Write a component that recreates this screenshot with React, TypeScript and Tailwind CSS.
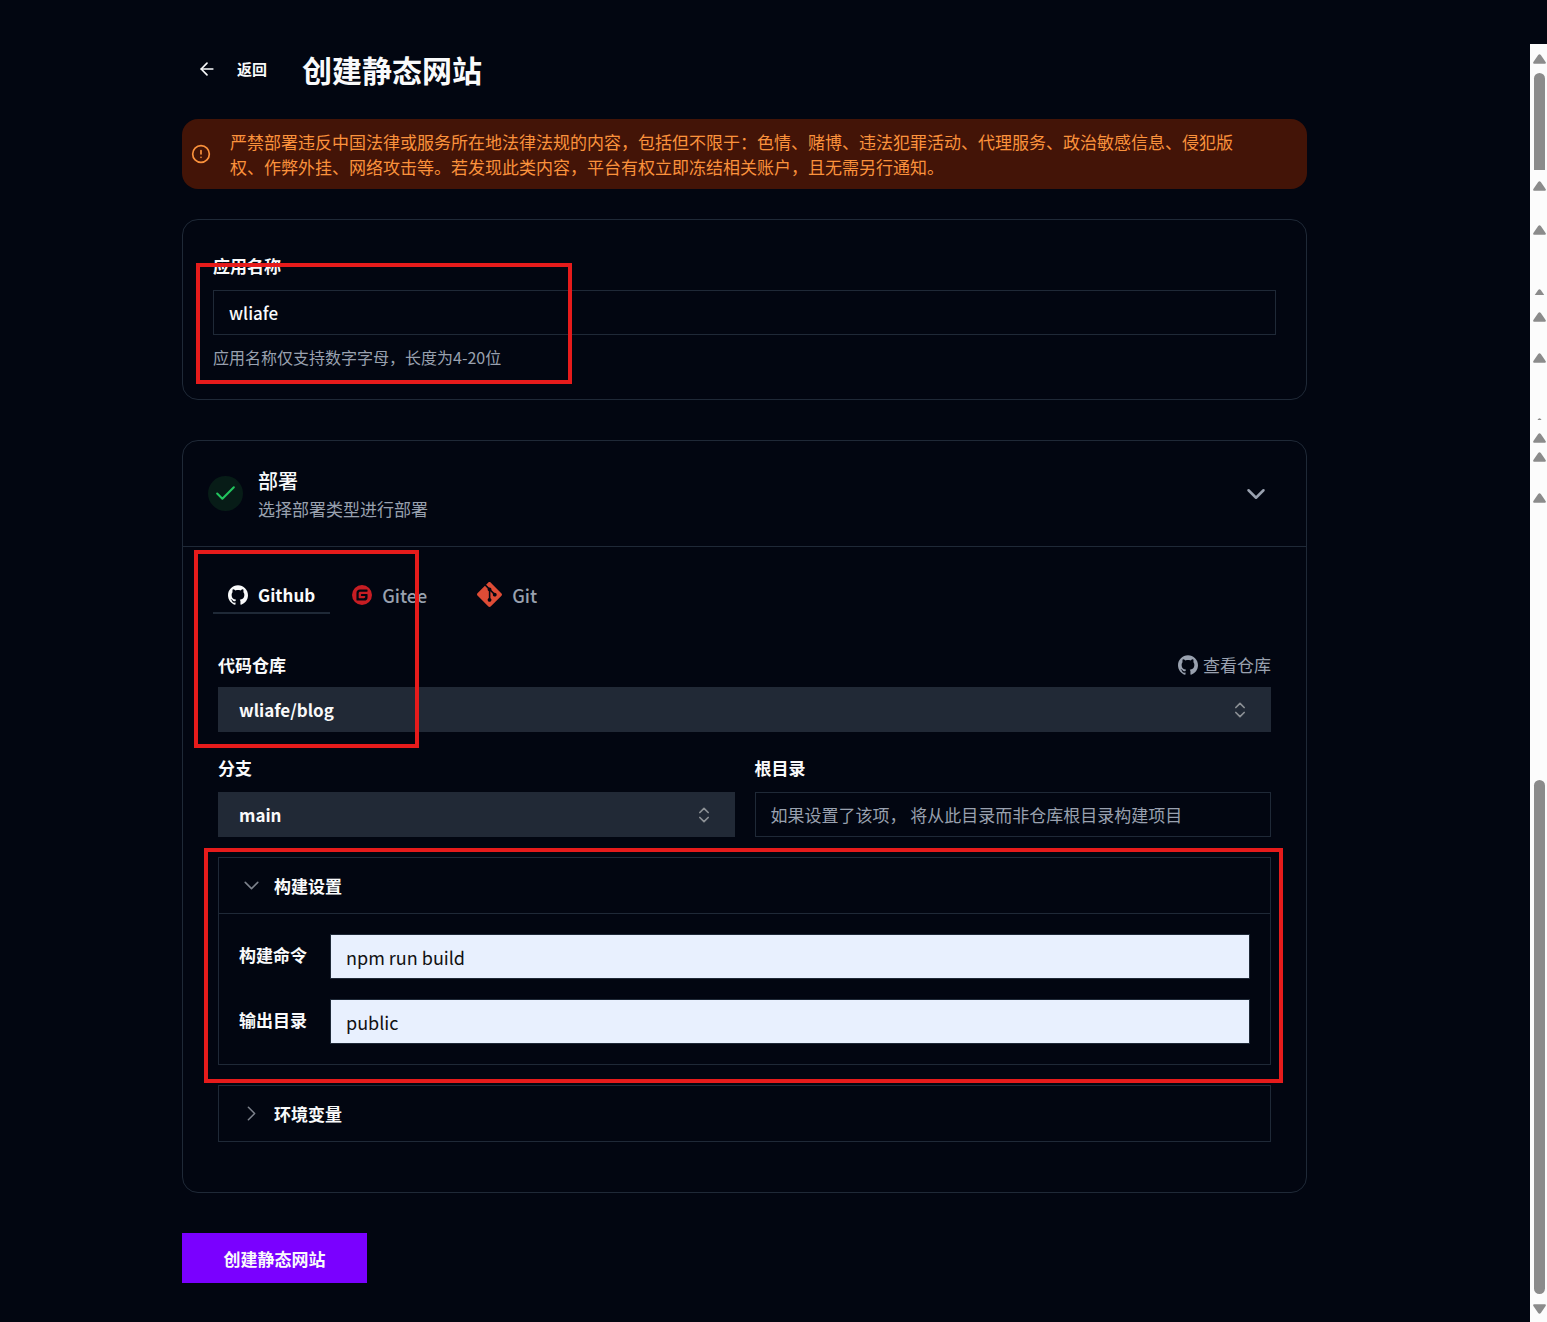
import { useState, type ReactNode } from "react";
import { ArrowLeft, Check, ChevronDown, ChevronRight, ChevronsUpDown, CircleAlert } from "lucide-react";
import { SiGit, SiGitee, SiGithub } from "react-icons/si";

function Highlight({ className }: { className: string }) {
  return <div aria-hidden="true" className={`pointer-events-none absolute z-10 border-4 border-[#e61b1b] ${className}`} />;
}

function SelectBox({ id, value }: { id: string; value: string }) {
  return (
    <div className="relative">
      <select
        id={id}
        defaultValue={value}
        className="block h-[45px] w-full appearance-none bg-[#212936] px-[21px] font-bold text-gray-50 outline-none"
      >
        <option value={value}>{value}</option>
      </select>
      <ChevronsUpDown size={20} className="pointer-events-none absolute right-[21px] top-[13px] text-[#8c9095]" />
    </div>
  );
}

function Tab({ icon, name, active, onClick, className }: { icon: ReactNode; name: string; active: boolean; onClick: () => void; className: string }) {
  return (
    <button
      type="button"
      role="tab"
      aria-selected={active}
      onClick={onClick}
      className={`flex h-[37px] items-center gap-[10px] border-b-2 px-[15px] ${
        active ? "border-[#1f2937] font-bold text-gray-50" : "border-transparent text-lg font-medium text-gray-400"
      } ${className}`}
    >
      {icon}
      {name}
    </button>
  );
}

function BuildField({ id, label, value }: { id: string; label: string; value: string }) {
  return (
    <div className="flex items-start gap-[21px]">
      <label htmlFor={id} className="w-[70px] shrink-0 pt-2 font-bold">
        {label}
      </label>
      <input
        id={id}
        defaultValue={value}
        className="h-[45px] min-w-0 flex-1 border border-[#1f2937] bg-[#e8f0fe] px-[15px] text-lg text-[#111] outline-none"
      />
    </div>
  );
}

function ArrowUp({ className }: { className: string }) {
  return (
    <svg viewBox="0 0 13 10" className={`w-[13px] shrink-0 ${className}`} preserveAspectRatio="xMidYMin slice" fill="#8b8b8b">
      <path d="M5.2 1 Q6.5 -0.6 7.8 1 L12.6 8 Q13.4 9.6 11.8 9.8 H1.2 Q-0.4 9.6 0.4 8 Z" />
    </svg>
  );
}

function ScrollRail() {
  return (
    <div aria-hidden="true" className="mt-11 flex w-[17px] shrink-0 flex-col items-center bg-[#fcfcfc] pl-[2px]">
      <ArrowUp className="mt-[10px] h-[10px]" />
      <div className="mt-[9px] h-[97px] w-[11px] shrink-0 rounded-t-full bg-[#8b8b8b]" />
      <ArrowUp className="mt-[11px] h-[10px]" />
      <ArrowUp className="mt-[34px] h-[10px]" />
      <ArrowUp className="mt-[54px] h-[6px]" />
      <ArrowUp className="mt-[17px] h-[10px]" />
      <ArrowUp className="mt-[31px] h-[10px]" />
      <ArrowUp className="mt-[55px] h-[2px]" />
      <ArrowUp className="mt-[13px] h-[10px]" />
      <ArrowUp className="mt-[9px] h-[10px]" />
      <ArrowUp className="mt-[31px] h-[10px]" />
      <div className="mt-[277px] w-[11px] flex-1 rounded-full bg-[#8b8b8b]" />
      <ArrowUp className="mb-2 mt-[10px] h-[10px] rotate-180" />
    </div>
  );
}

export default function App() {
  const [source, setSource] = useState("Github");
  return (
    <div
      lang="zh-CN"
      className="flex min-h-screen bg-[#020611] font-['Noto_Sans_CJK_SC',sans-serif] text-[17px] leading-[25px] text-gray-50"
    >
      <main className="min-w-0 flex-1 pb-[39px] pl-[182px] pr-[223px] pt-[49px]">
        <header className="flex h-10 items-center">
          <button type="button" className="ml-[15px] flex items-center gap-5 text-[15px] font-bold leading-6">
            <ArrowLeft size={20} />
            返回
          </button>
          <h1 className="ml-[35px] text-3xl font-bold leading-10">创建静态网站</h1>
        </header>

        <div role="alert" className="mt-[30px] flex items-center rounded-2xl bg-[#431407] py-[10px] pl-[9px] pr-16 text-[#fb923c]">
          <CircleAlert size={20} className="shrink-0" />
          <p className="ml-[19px]">
            严禁部署违反中国法律或服务所在地法律法规的内容，包括但不限于：色情、赌博、违法犯罪活动、代理服务、政治敏感信息、侵犯版权、作弊外挂、网络攻击等。若发现此类内容，平台有权立即冻结相关账户，且无需另行通知。
          </p>
        </div>

        <form onSubmit={(e) => e.preventDefault()}>
          <section className="relative mt-[30px] rounded-2xl border border-[#1f2937] px-[30px] pb-[29px] pt-[33px]">
            <Highlight className="left-[13px] top-[43px] h-[121px] w-[376px]" />
            <label htmlFor="app-name" className="block font-bold">
              应用名称
            </label>
            <input
              id="app-name"
              defaultValue="wliafe"
              className="mt-3 block h-[45px] w-full border border-[#1f2937] bg-transparent px-[15px] font-medium text-gray-50 outline-none"
            />
            <p className="mt-[10px] text-base leading-[25px] text-gray-400">应用名称仅支持数字字母，长度为4-20位</p>
          </section>

          <section className="mt-10 rounded-2xl border border-[#1f2937]">
            <div className="flex h-[106px] items-center border-b border-[#1f2937] pl-[25px] pr-[35px]">
              <span className="flex size-[35px] items-center justify-center rounded-full bg-[#071c17] text-[#22c55e]">
                <Check size={25} strokeWidth={2} />
              </span>
              <div className="ml-[15px] pb-px">
                <h2 className="text-xl font-medium leading-[30px]">部署</h2>
                <p className="text-gray-400">选择部署类型进行部署</p>
              </div>
              <button type="button" aria-label="收起" className="ml-auto text-gray-400">
                <ChevronDown size={30} />
              </button>
            </div>

            <div className="relative px-[35px] pb-[50px] pt-[30px]">
              <Highlight className="left-[11px] top-[3px] h-[198px] w-[225px]" />
              <div role="tablist" className="-ml-[5px] flex">
                <Tab className="" icon={<SiGithub size={20} />} name="Github" active={source === "Github"} onClick={() => setSource("Github")} />
                <Tab className="ml-[7px]" icon={<SiGitee size={20} color="#c71d23" />} name="Gitee" active={source === "Gitee"} onClick={() => setSource("Gitee")} />
                <Tab className="ml-5" icon={<SiGit size={25} color="#de4c36" />} name="Git" active={source === "Git"} onClick={() => setSource("Git")} />
              </div>

              <div className="mt-[38px] flex items-center justify-between">
                <label htmlFor="repo" className="font-bold">
                  代码仓库
                </label>
                <a href="#repo" className="flex items-center gap-[5px] text-gray-400">
                  <SiGithub size={20} />
                  查看仓库
                </a>
              </div>
              <div className="mt-[10px]">
                <SelectBox id="repo" value="wliafe/blog" />
              </div>

              <div className="mt-[23px] grid grid-cols-2 gap-5">
                <div>
                  <label htmlFor="branch" className="mb-3 block font-bold">
                    分支
                  </label>
                  <SelectBox id="branch" value="main" />
                </div>
                <div>
                  <label htmlFor="root-dir" className="mb-3 block font-bold">
                    根目录
                  </label>
                  <input
                    id="root-dir"
                    placeholder="如果设置了该项， 将从此目录而非仓库根目录构建项目"
                    className="block h-[45px] w-full border border-[#1f2937] bg-transparent px-[15px] text-gray-50 outline-none placeholder:text-gray-400"
                  />
                </div>
              </div>

              <div className="relative mt-5 border border-[#1f2937]">
                <Highlight className="-bottom-[19px] -left-[15px] -right-[13px] -top-[10px]" />
                <button type="button" aria-expanded="true" className="flex h-14 w-full items-center gap-[10px] border-b border-[#1f2937] px-5 font-bold">
                  <ChevronDown size={25} strokeWidth={1.5} className="text-[#7d828c]" />
                  构建设置
                </button>
                <div className="flex flex-col gap-5 p-5">
                  <BuildField id="build-command" label="构建命令" value="npm run build" />
                  <BuildField id="output-dir" label="输出目录" value="public" />
                </div>
              </div>

              <button type="button" aria-expanded="false" className="mt-5 flex h-[57px] w-full items-center gap-[10px] border border-[#1f2937] px-5 font-bold">
                <ChevronRight size={25} strokeWidth={1.5} className="text-[#7d828c]" />
                环境变量
              </button>
            </div>
          </section>

          <button type="submit" className="mt-10 h-[50px] min-w-[185px] bg-[#7a00ff] px-10 font-bold">
            创建静态网站
          </button>
        </form>
      </main>
      <ScrollRail />
    </div>
  );
}
